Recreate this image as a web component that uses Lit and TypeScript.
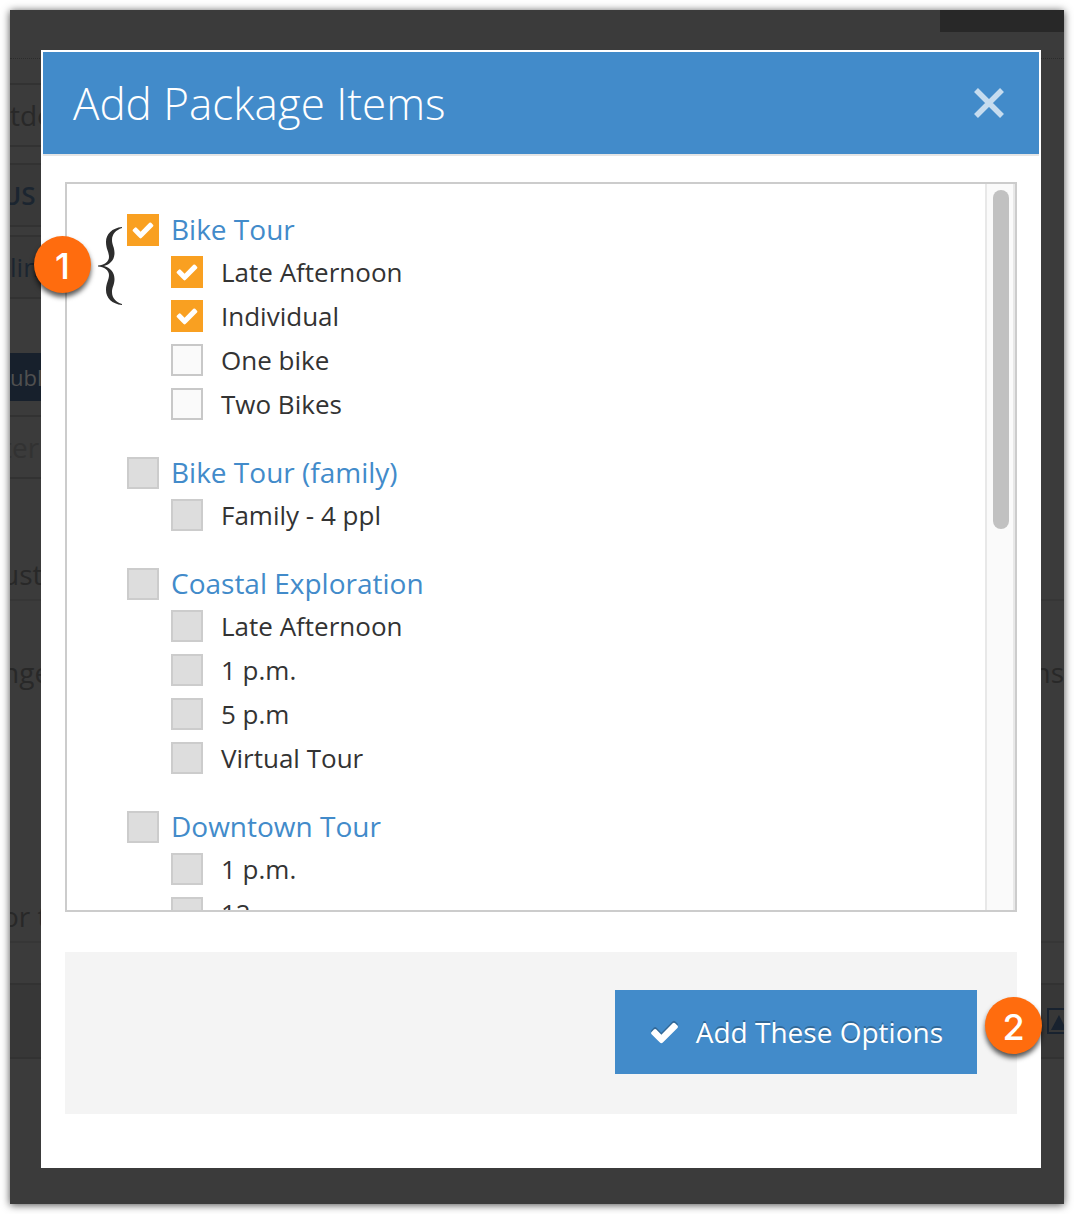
import { LitElement, html, css, svg, nothing } from "lit";
import { customElement, property, state } from "lit/decorators.js";

type Option = { id: string; label: string; checked?: boolean };
type Group = { id: string; name: string; checked?: boolean; active?: boolean; options: Option[] };

const GROUPS: Group[] = [
  {
    id: "bike", name: "Bike Tour", checked: true, active: true,
    options: [
      { id: "bike-late", label: "Late Afternoon", checked: true },
      { id: "bike-individual", label: "Individual", checked: true },
      { id: "bike-one", label: "One bike" },
      { id: "bike-two", label: "Two Bikes" },
    ],
  },
  {
    id: "family", name: "Bike Tour (family)",
    options: [{ id: "family-4", label: "Family - 4 ppl" }],
  },
  {
    id: "coastal", name: "Coastal Exploration",
    options: [
      { id: "coastal-late", label: "Late Afternoon" },
      { id: "coastal-1", label: "1 p.m." },
      { id: "coastal-5", label: "5 p.m" },
      { id: "coastal-virtual", label: "Virtual Tour" },
    ],
  },
  {
    id: "downtown", name: "Downtown Tour",
    options: [
      { id: "downtown-1", label: "1 p.m." },
      { id: "downtown-12", label: "12" },
    ],
  },
];

const checkPath = svg`<path fill="currentColor" d="M1671 566q0 40-28 68l-724 724-136 136q-28 28-68 28t-68-28l-136-136-362-362q-28-28-28-68t28-68l136-136q28-28 68-28t68 28l294 295 656-657q28-28 68-28t68 28l136 136q28 28 28 68z"/>`;

/* Square tick box with its label. */
@customElement("tick-box")
class TickBox extends LitElement {
  @property() label = "";
  @property({ type: Boolean }) checked = false;
  @property({ type: Boolean }) muted = false;
  @property({ type: Boolean }) heading = false;

  static styles = css`
    :host { display: block; }
    .row {
      display: flex;
      align-items: center;
      gap: 18px;
      height: 32px;
      font-size: 26px;
      line-height: 32px;
      color: #333;
    }
    .heading { gap: 12px; font-size: 28px; line-height: 30px; color: #428bca; }
    .heading .text { padding-bottom: 2px; }
    .box { display: grid; flex: none; place-items: center; }
    .input, .mark { grid-area: 1 / 1; }
    .input {
      appearance: none;
      box-sizing: border-box;
      width: 32px;
      height: 32px;
      margin: 0;
      border: 2px solid #c8c8c8;
      border-radius: 0;
      background: #fafafa;
    }
    .muted { background: #ddd; border-color: #ccc; }
    .input:checked { background: #f9a021; border-color: #f9a021; }
    .mark { width: 24px; height: 24px; color: #fff; pointer-events: none; }
  `;

  render() {
    return html`
      <label class="row ${this.heading ? "heading" : ""}">
        <span class="box">
          <input class="input ${this.muted ? "muted" : ""}" type="checkbox" .checked=${this.checked}
            @change=${(e: Event) => (this.checked = (e.target as HTMLInputElement).checked)} />
          ${this.checked ? html`<svg class="mark" viewBox="0 0 1792 1792" aria-hidden="true">${checkPath}</svg>` : nothing}
        </span>
        <span class="text">${this.label}</span>
      </label>`;
  }
}

/* Round numbered callout. */
@customElement("step-badge")
class StepBadge extends LitElement {
  static styles = css`
    :host {
      display: grid;
      place-items: center;
      width: 57px;
      height: 57px;
      border-radius: 50%;
      background: #ff6c0e;
      box-shadow: 0 4px 5px rgba(0, 0, 0, 0.65);
      color: #fff;
      font: 500 36px/60px Inter, "Liberation Sans", sans-serif;
    }
  `;
  render() {
    return html`<slot></slot>`;
  }
}

/* Dimmed page that shows around the dialog. */
@customElement("dimmed-page")
class DimmedPage extends LitElement {
  static styles = css`
    :host {
      display: flex;
      flex-direction: column;
      overflow: hidden;
      color: #282828;
      font-size: 28px;
      white-space: nowrap;
    }
    .row {
      box-sizing: border-box;
      display: flex;
      flex: none;
      align-items: center;
      justify-content: space-between;
      height: 64px;
    }
    .cut { text-indent: -8px; }
    .tab { align-self: flex-end; width: 124px; height: 22px; background: #282828; }
    .dotted { height: 27px; border-bottom: 1px dotted #2c2c2c; }
    .field { width: 50%; border: solid #323232; border-width: 2px 0; }
    .top { margin-top: 24px; }
    .next { margin-top: 16px; }
    .near { margin-top: 8px; }
    .shade { background: #393939; color: #1b2530; font-size: 26px; }
    .strong { font-weight: 600; }
    .publish { width: 50%; height: 48px; margin-top: 54px; background: #17202c; color: #505050; font-size: 22px; }
    .hint { margin-top: 14px; color: #323232; }
    .section { height: 52px; border-bottom: 2px solid #363636; }
    .first { margin-top: 70px; }
    .body { margin-top: 39px; }
    .second { margin-top: 187px; }
    .toolbar { height: 76px; margin-top: 40px; border: solid #323232; border-width: 2px 0; background: #373737; }
    .picture { width: 17px; height: 26px; }
  `;
  render() {
    return html`
      <div class="tab"></div>
      <div class="row dotted"></div>
      <div class="row field top">tdo</div>
      <div class="row field next shade cut strong">US</div>
      <div class="row field near shade">lin</div>
      <div class="row publish">ubl</div>
      <div class="row field hint cut">ter</div>
      <div class="row section first"><span class="cut">ust</span></div>
      <div class="row body"><span class="cut">nge</span><span>ns</span></div>
      <div class="row section second"><span class="cut">or t</span></div>
      <div class="row toolbar">
        <span></span>
        <svg class="picture" viewBox="0 0 17 26" aria-hidden="true">
          <path d="M18 1H1v24h17" fill="none" stroke="#18222f" stroke-width="2" />
          <path d="M4 22L12 7l6 12v3z" fill="#18222f" />
        </svg>
      </div>`;
  }
}

@customElement("app-root")
class AppRoot extends LitElement {
  @state() private scrolled = 0;

  static styles = css`
    :host {
      box-sizing: border-box;
      display: block;
      height: 100vh;
      padding: 10px;
      background: #fff;
      font-family: "Open Sans", "Noto Sans", sans-serif;
    }
    .stage {
      box-sizing: border-box;
      position: relative;
      display: flex;
      height: 100%;
      padding: 40px 23px 36px 31px;
      background: #3b3b3b;
      box-shadow: 0 1px 8px rgba(0, 0, 0, 0.7);
    }
    .behind { position: absolute; inset: 0; }
    .dialog {
      position: relative;
      display: flex;
      flex: 1;
      flex-direction: column;
      min-width: 0;
      background: #fff;
    }
    .header {
      display: flex;
      align-items: center;
      justify-content: space-between;
      margin: 2px 2px 0;
      padding: 0 34px 0 30px;
      border-bottom: 2px solid #e5e5e5;
      background: #428bca;
      color: #fff;
    }
    .title { margin: 0; font-size: 44px; font-weight: 300; line-height: 102px; }
    .close {
      display: flex;
      padding: 0;
      border: 0;
      background: none;
      color: #c6dcef;
    }
    .cross { width: 32px; height: 32px; }
    .body {
      display: flex;
      flex: 1;
      flex-direction: column;
      gap: 40px;
      min-height: 0;
      padding: 26px 24px 54px;
    }
    .panel {
      display: flex;
      flex: 1;
      min-height: 0;
      border: 2px solid #ccc;
    }
    .list {
      display: flex;
      flex: 1;
      flex-direction: column;
      gap: 37px;
      overflow-y: auto;
      padding: 30px 60px;
      scrollbar-width: none;
    }
    .group { margin: 0; padding: 0; border: 0; }
    .options {
      display: flex;
      flex-direction: column;
      gap: 12px;
      padding: 10px 0 0 44px;
    }
    .track {
      box-sizing: border-box;
      flex: none;
      width: 30px;
      padding: 6px;
      border: solid #e8e8e8;
      border-width: 0 2px;
      background: #fafafa;
    }
    .thumb {
      position: relative;
      width: 16px;
      height: 47.5%;
      border-radius: 8px;
      background: #c1c1c1;
    }
    .footer {
      position: relative;
      display: flex;
      justify-content: flex-end;
      padding: 38px 40px 40px;
      background: #f4f4f4;
    }
    .submit {
      display: flex;
      align-items: center;
      gap: 16px;
      height: 84px;
      padding: 0 34px;
      border: 0;
      background: #428bca;
      color: #fff;
      font-family: inherit;
      font-size: 28px;
      text-shadow: 0 -2px 0 rgba(0, 0, 0, 0.25);
    }
    .tick { width: 31px; height: 31px; filter: drop-shadow(0 -2px 0 rgba(0, 0, 0, 0.25)); }
    .badge-one { position: absolute; top: 186px; left: -7px; }
    .badge-two { position: absolute; top: 45px; right: -25px; }
    .brace { position: absolute; top: 177px; left: 57px; width: 24px; height: 78px; }
  `;

  private onScroll(e: Event) {
    const list = e.target as HTMLElement;
    this.scrolled = list.scrollTop / Math.max(1, list.scrollHeight - list.clientHeight);
  }

  render() {
    return html`
      <div class="stage">
        <dimmed-page class="behind" aria-hidden="true"></dimmed-page>
        <section class="dialog" role="dialog" aria-labelledby="title">
          <header class="header">
            <h1 class="title" id="title">Add Package Items</h1>
            <button class="close" type="button" aria-label="Close">
              <svg class="cross" viewBox="0 0 32 32" aria-hidden="true">
                <path d="M3 3L29 29M29 3L3 29" stroke="currentColor" stroke-width="5.5" />
              </svg>
            </button>
          </header>
          <div class="body">
            <div class="panel">
              <div class="list" @scroll=${this.onScroll}>
                ${GROUPS.map((g) => html`
                  <div class="group" role="group" aria-label=${g.name}>
                    <tick-box heading .label=${g.name} .checked=${!!g.checked} .muted=${!g.active}></tick-box>
                    <div class="options">
                      ${g.options.map((o) => html`
                        <tick-box .label=${o.label} .checked=${!!o.checked} .muted=${!g.active}></tick-box>`)}
                    </div>
                  </div>`)}
              </div>
              <div class="track" aria-hidden="true">
                <div class="thumb" style="top: ${this.scrolled * 52.5}%"></div>
              </div>
            </div>
            <footer class="footer">
              <button class="submit" type="button">
                <svg class="tick" viewBox="0 0 1792 1792" aria-hidden="true">${checkPath}</svg>
                Add These Options
              </button>
              <step-badge class="badge-two">2</step-badge>
            </footer>
          </div>
          <svg class="brace" viewBox="0 0 24 78" aria-hidden="true">
            <path fill="#2d2d2d" d="M24 0C14 1 8 7 8 15C8 22 11 25 11 30C11 35 6 38 0 38.500V39.500C6 40 11 43 11 48C11 53 8 56 8 63C8 71 14 77 24 78V77C18 75 14 71 14 65C14 60 16.500 58 16.500 52C16.500 45 12 40.500 6 39C12 37.500 16.500 33 16.500 26C16.500 20 14 18 14 13C14 7 18 3 24 1Z" />
          </svg>
          <step-badge class="badge-one">1</step-badge>
        </section>
      </div>`;
  }
}
